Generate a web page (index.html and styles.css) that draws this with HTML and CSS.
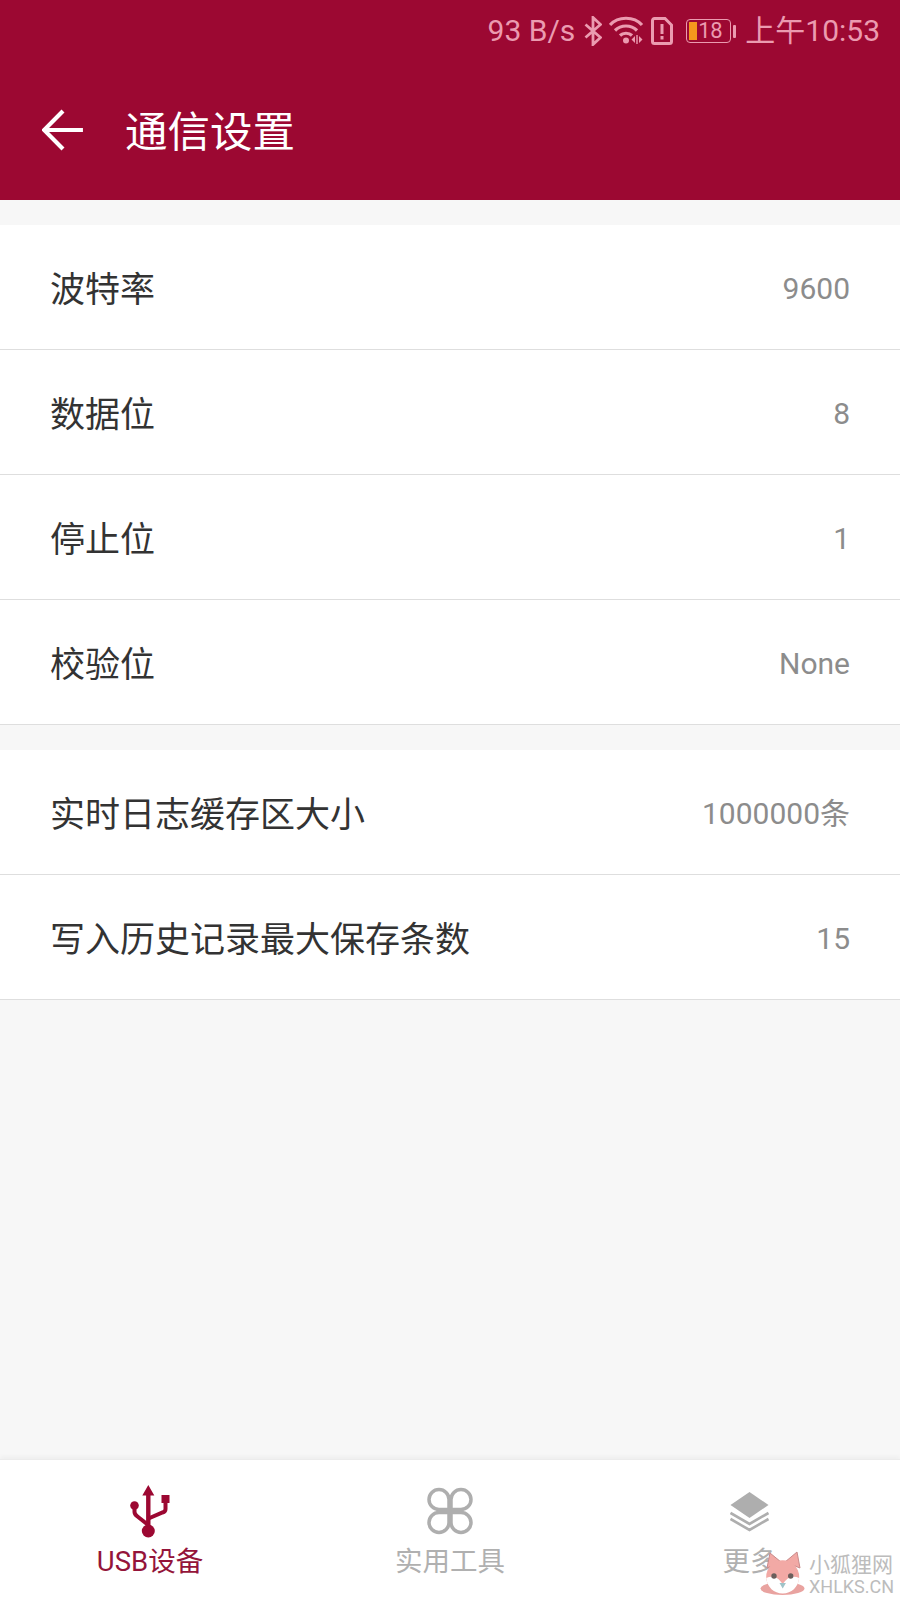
FILE: index.html
```html
<!DOCTYPE html>
<html lang="zh-CN">
<head>
<meta charset="utf-8">
<title>通信设置</title>
<link rel="stylesheet" href="styles.css">
</head>
<body>
<div class="app">
  <header class="header">
    <div class="status">
      <span class="speed">93 B/s</span>
      <svg class="st-bt" viewBox="0 0 18 30"><path d="M1.500 8.500l15 13L9 28.500V1.500l7.500 7-15 13" fill="none" stroke="currentColor" stroke-width="2.800"/></svg>
      <svg class="st-wifi" viewBox="0 0 36 30"><g fill="none" stroke="currentColor" stroke-width="3.200"><path d="M1 9C9 0 25 0 33 9"/><path d="M6 14.500c6-6 16-6 22 0"/><path d="M11 19.500c3-3 9-3 12 0"/></g><circle cx="17" cy="24.500" r="3" fill="currentColor"/><path d="M26 20v7l-3.500-3.500zM30 20v7l3.500-3.500zM27.300 19h1.400v9h-1.400z" fill="currentColor"/></svg>
      <svg class="st-sim" viewBox="0 0 22 28"><path d="M1.500 3.500a2 2 0 0 1 2-2h10.500l6.500 6.500v16.500a2 2 0 0 1-2 2h-15a2 2 0 0 1-2-2z" fill="none" stroke="currentColor" stroke-width="3"/><path d="M9.500 7h3v10h-3zM9.500 19h3v3.500h-3z" fill="currentColor"/></svg>
      <span class="battery"><span class="bat-body"><span class="bat-fill"></span><span class="bat-num">18</span></span><span class="bat-tip"></span></span>
      <span class="time">上午10:53</span>
    </div>
    <div class="toolbar">
      <svg class="back" viewBox="0 0 40 40"><path d="M39 20H3M20 2L2 20l18 18" fill="none" stroke="#fff" stroke-width="4"/></svg>
      <h1 class="title">通信设置</h1>
    </div>
  </header>

  <main class="content">
    <section class="group">
      <div class="row"><span class="label">波特率</span><span class="value">9600</span></div>
      <div class="row"><span class="label">数据位</span><span class="value">8</span></div>
      <div class="row"><span class="label">停止位</span><span class="value">1</span></div>
      <div class="row"><span class="label">校验位</span><span class="value">None</span></div>
    </section>
    <section class="group">
      <div class="row"><span class="label">实时日志缓存区大小</span><span class="value">1000000条</span></div>
      <div class="row"><span class="label">写入历史记录最大保存条数</span><span class="value">15</span></div>
    </section>
  </main>

  <nav class="nav">
    <div class="tab active">
      <svg class="tab-icon" viewBox="0 0 40 54"><path d="M18.300 1l6 10.500h-3.800V42h-4.400V11.500h-3.800z" fill="#9c0832"/><circle cx="18.300" cy="47" r="6.500" fill="#9c0832"/><circle cx="4.500" cy="21.500" r="4.300" fill="#9c0832"/><rect x="31.500" y="11" width="8" height="8" fill="#9c0832"/><path d="M4.500 25v3c0 2 1 3 3 4.500l10.800 8.500M35.500 19v6c0 2-1 3-3 3.500L18.500 34.500" fill="none" stroke="#9c0832" stroke-width="4"/></svg>
      <span class="tab-label">USB设备</span>
    </div>
    <div class="tab">
      <svg class="tab-icon" viewBox="0 0 46 54"><g fill="none" stroke="#aeaeae" stroke-width="3.500"><path d="M22 25.500H12a10 10 0 1 1 10-10z"/><path d="M24 25.500h10a10 10 0 1 0-10-10z"/><path d="M22 28.500H12a10 10 0 1 0 10 10z"/><path d="M24 28.500h10a10 10 0 1 1-10 10z"/></g></svg>
      <span class="tab-label">实用工具</span>
    </div>
    <div class="tab">
      <svg class="tab-icon" viewBox="0 0 40 54"><path d="M19.500 8l19 13-19 13-19-13z" fill="#aeaeae"/><path d="M.5 29l19 11 19-11M.5 35l19 11 19-11" fill="none" stroke="#aeaeae" stroke-width="2.600"/></svg>
      <span class="tab-label">更多</span>
    </div>
  </nav>

  <div class="watermark">
    <svg class="fox" viewBox="0 0 46 46"><ellipse cx="22.500" cy="38.500" rx="22" ry="6.500" fill="#e9a3a0"/><path d="M7 18L10 3l11 9zM40 18L37 2 25 12z" fill="#f2a9a5" stroke="#c98a8a" stroke-width="1"/><circle cx="22.700" cy="26.700" r="16.500" fill="#f2a9a5"/><path d="M6.300 28c6-3 12-1 16.400 6 4.400-7 10.400-9 16.400-6-.7 9-7.700 15.500-16.400 15.500S7 37 6.300 28z" fill="#fff"/><circle cx="14" cy="26" r="2.700" fill="#6b5f5c"/><circle cx="30.700" cy="26" r="2.700" fill="#6b5f5c"/><path d="M19.500 33h6.400l-3.200 5.500z" fill="#9fc3c8"/></svg>
    <div class="wm-text"><span class="wm-cn">小狐狸网</span><span class="wm-en">XHLKS.CN</span></div>
  </div>
</div>
</body>
</html>
```
FILE: styles.css
```css
* { box-sizing: border-box; }
html, body { margin: 0; padding: 0; }
body {
  width: 900px;
  height: 1600px;
  overflow: hidden;
  background: #f7f7f7;
  font-family: Roboto, "Noto Sans CJK SC", sans-serif;
}
.app {
  position: relative;
  width: 900px;
  height: 1600px;
  display: flex;
  flex-direction: column;
}
.header {
  height: 200px;
  flex: none;
  background: #9c0832;
  display: flex;
  flex-direction: column;
}
.status {
  height: 62px;
  padding-right: 20px;
  display: flex;
  align-items: center;
  justify-content: flex-end;
  color: #eb9bb0;
  font-size: 30px;
  line-height: 36px;
  white-space: nowrap;
}
.speed { margin-right: 9px; }
.st-bt { width: 18px; height: 30px; margin-right: 7px; }
.st-wifi { width: 36px; height: 30px; margin-right: 6px; }
.st-sim { width: 22px; height: 28px; margin-right: 13px; }
.battery { display: flex; align-items: center; margin-right: 9px; }
.bat-body {
  width: 45px;
  height: 24px;
  border: 1.5px solid #eb9bb0;
  border-radius: 4px;
  display: flex;
  align-items: center;
  padding-left: 2px;
}
.bat-fill { width: 8px; height: 18px; background: #f5971d; flex: none; }
.bat-num { font-size: 22px; line-height: 20px; margin-left: 1px; letter-spacing: -0.5px; }
.bat-tip { width: 3px; height: 13px; margin-left: 2px; background: #eb9bb0; border-radius: 1px; }
.toolbar {
  flex: 1;
  display: flex;
  align-items: center;
  padding-left: 42px;
  padding-bottom: 2px;
}
.back { width: 42px; height: 42px; margin-right: 41px; flex: none; }
.title {
  margin: 0;
  padding-top: 6px;
  color: #fff;
  font-size: 42.5px;
  font-weight: 400;
  line-height: 50px;
}
.content {
  flex: 1;
  display: flex;
  flex-direction: column;
  padding-top: 25px;
  gap: 25px;
}
.group { background: #fff; }
.row {
  height: 125px;
  padding: 0 50px;
  display: flex;
  align-items: center;
  justify-content: space-between;
  border-bottom: 1px solid #dedede;
}
.label { font-size: 35px; line-height: 44px; color: #333; padding-top: 8px; }
.value { font-size: 30px; line-height: 36px; color: #8c8c8c; padding-top: 4px; }
.nav {
  height: 141px;
  flex: none;
  background: #fff;
  border-top: 1px solid #ececec;
  box-shadow: 0 -3px 4px rgba(0,0,0,0.03);
  display: grid;
  grid-template-columns: repeat(3, 300px);
}
.tab {
  display: flex;
  flex-direction: column;
  align-items: center;
  padding-top: 24px;
  color: #b0b0b0;
}
.tab.active { color: #94143a; }
.tab-icon { height: 54px; width: auto; flex: none; }
.tab-label { font-size: 27.5px; line-height: 36px; margin-top: 6px; }
.watermark {
  position: absolute;
  left: 760px;
  top: 1550px;
  display: flex;
  align-items: flex-start;
  gap: 3px;
}
.fox { width: 46px; height: 46px; }
.wm-text { display: flex; flex-direction: column; color: #bcbcbc; padding-top: 3px; }
.wm-cn { font-size: 21px; line-height: 24px; }
.wm-en { font-size: 18px; line-height: 20px; }
```
